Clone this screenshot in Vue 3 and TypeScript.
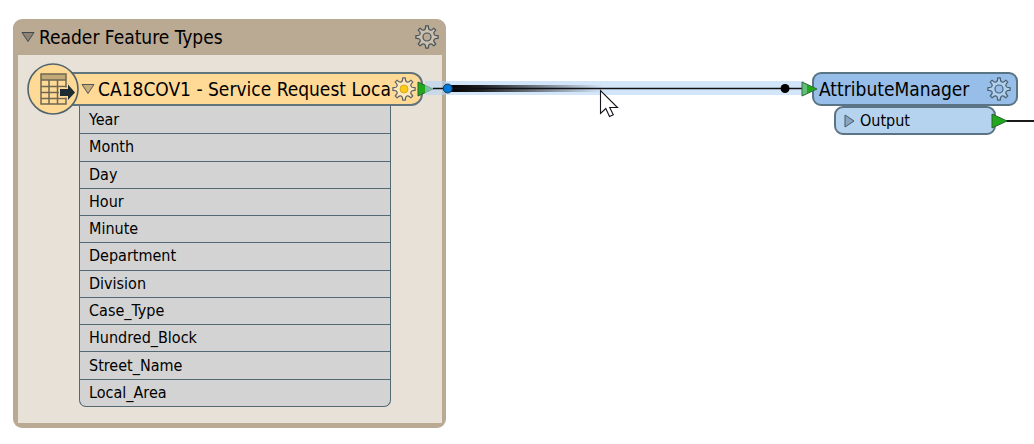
<script setup lang="ts">
import { ref } from 'vue'

const attributes = ref<string[]>([
  'Year',
  'Month',
  'Day',
  'Hour',
  'Minute',
  'Department',
  'Division',
  'Case_Type',
  'Hundred_Block',
  'Street_Name',
  'Local_Area',
])

const point = (radius: number, degrees: number): string => {
  const a = (degrees * Math.PI) / 180
  return `${(12 + radius * Math.sin(a)).toFixed(2)} ${(12 - radius * Math.cos(a)).toFixed(2)}`
}

// Eight teeth with flat tips, joined by rounded valleys.
const gearPath = (): string => {
  let d = ''
  for (let i = 0; i < 8; i++) {
    const c = i * 45
    d += `${i ? 'L' : 'M'}${point(11.2, c - 7)} L${point(11.2, c + 7)} C${point(6.6, c + 9)} ${point(6.6, c + 36)} ${point(11.2, c + 38)} `
  }
  return d + 'Z'
}
const gear = gearPath()
</script>

<template>
  <main class="canvas">
    <section class="bookmark">
      <header class="bookmark-head">
        <button class="toggle" type="button" aria-label="Collapse bookmark">
          <svg width="14" height="12" viewBox="0 0 14 12"><path d="M1 1.5H13L7 10.5Z" fill="#8f8474" stroke="#3f4b50" /></svg>
        </button>
        <h1>Reader Feature Types</h1>
        <button class="gear" type="button" aria-label="Bookmark properties">
          <svg width="24" height="24" viewBox="0 0 24 24">
            <path :d="gear" fill="#cbbfaf" stroke="#46545a" stroke-width="1.2" stroke-linejoin="round" />
            <circle cx="12" cy="12" r="4" fill="#baa993" stroke="#46545a" stroke-width="1.2" />
          </svg>
        </button>
      </header>

      <div class="bookmark-body">
        <div class="reader">
          <svg class="badge" width="52" height="52" viewBox="0 0 52 52">
            <circle cx="26" cy="26" r="25" fill="#ffd996" stroke="#4f646c" stroke-width="1.6" />
            <path d="M14 11H39V17H14Z" fill="#c2a978" />
            <path d="M14 11H39V41H14ZM14 17H39M14 23.500H39M14 29.500H39M14 35.500H39M22 17V41M30.500 17V41" fill="none" stroke="#6f6851" stroke-width="1.500" />
            <path d="M32 24.500H41V34.500H32Z" fill="#ffd996" />
            <path d="M33 26H41V21.500L48 29.500L41 37V33H33Z" fill="#1d2b32" />
          </svg>
          <button class="toggle" type="button" aria-label="Hide attributes">
            <svg width="14" height="12" viewBox="0 0 14 12"><path d="M1 1.500H13L7 10.500Z" fill="#c9ad79" stroke="#4f5a58" /></svg>
          </button>
          <h2>CA18COV1 - Service Request Loca</h2>
          <button class="gear" type="button" aria-label="Feature type properties">
            <svg width="24" height="24" viewBox="0 0 24 24">
              <path :d="gear" fill="#ffe8bd" stroke="#5c6668" stroke-width="1.2" stroke-linejoin="round" />
              <circle cx="12" cy="12" r="4" fill="#fccb16" stroke="#dca92b" />
            </svg>
          </button>
          <svg class="port" width="17" height="16" viewBox="0 0 17 16"><path d="M1 1V15L16 8Z" fill="#22a81c" stroke="#24662b" /></svg>
        </div>
        <ul class="attributes">
          <li v-for="name in attributes" :key="name">{{ name }}</li>
        </ul>
      </div>
    </section>

    <div class="connection">
      <svg class="wire" width="100%" height="14">
        <defs>
          <linearGradient id="flow">
            <stop offset="0" stop-color="#000" />
            <stop offset="0.2" stop-color="#000" stop-opacity="0.87" />
            <stop offset="1" stop-color="#000" stop-opacity="0" />
          </linearGradient>
        </defs>
        <rect width="100%" height="14" fill="#b5d3f4" fill-opacity="0.6" />
        <rect x="6%" y="4" width="41%" height="7" fill="url(#flow)" />
        <line x1="8" y1="7.500" x2="100%" y2="7.500" stroke="#101014" stroke-width="1.500" />
        <circle cx="6%" cy="7.500" r="4.500" fill="#0078d7" stroke="#123a5c" />
        <circle cx="95%" cy="7.500" r="4.500" fill="#000" />
      </svg>
      <svg class="cursor" width="20" height="30" viewBox="0 0 20 30">
        <path d="M1.500 1.500V24.500L6.800 19.500L10.500 27.500L14.300 25.800L10.700 18.500H18.500Z" fill="#fff" stroke="#15151f" stroke-width="1.100" />
      </svg>
    </div>

    <section class="transformer">
      <header class="transformer-head">
        <svg class="port" width="17" height="16" viewBox="0 0 17 16">
          <path d="M1 1V15L16 8Z" fill="#22a81c" />
          <path d="M1 1V15L6 12.700V3.300Z" fill="#67bd78" />
          <path d="M1 1V15L16 8Z" fill="none" stroke="#2b6c42" />
        </svg>
        <h2>AttributeManager</h2>
        <button class="gear" type="button" aria-label="Transformer properties">
          <svg width="24" height="24" viewBox="0 0 24 24">
            <path :d="gear" fill="#b0d0ef" stroke="#4b6172" stroke-width="1.2" stroke-linejoin="round" />
            <circle cx="12" cy="12" r="4" fill="#96bee8" stroke="#4b6172" stroke-width="1.2" />
          </svg>
        </button>
      </header>
      <div class="output-row">
        <div class="output">
          <button class="toggle" type="button" aria-label="Show output attributes">
            <svg width="11" height="14" viewBox="0 0 11 14"><path d="M1 1V13L10 7Z" fill="#8aa5bf" stroke="#46596a" /></svg>
          </button>
          <span>Output</span>
          <svg class="port" width="17" height="16" viewBox="0 0 17 16"><path d="M1 1V15L16 8Z" fill="#22a81c" stroke="#24662b" /></svg>
        </div>
        <div class="tail"></div>
      </div>
    </section>
  </main>
</template>

<style>
body {
  margin: 0;
  background: #fff;
}
</style>

<style scoped>
* {
  box-sizing: border-box;
}

.canvas {
  display: flex;
  align-items: flex-start;
  padding: 19px 0 16px 13px;
  overflow: hidden;
  color: #000;
  font-family: "DejaVu Sans Condensed", "DejaVu Sans", sans-serif;
}

h1,
h2 {
  margin: 0;
  font-size: 19px;
  font-weight: 400;
  line-height: 24px;
  white-space: nowrap;
}

svg {
  display: block;
}

button {
  flex: none;
  padding: 0;
  border: 0;
  background: none;
  color: inherit;
  cursor: pointer;
}

.bookmark {
  flex: 0 1 433px;
  min-width: 0;
  padding: 0 4px 5px 5px;
  border-radius: 9px;
  background: #baa993;
}

.bookmark-head {
  display: flex;
  align-items: center;
  gap: 4px;
  height: 36px;
  padding: 0 3px;
}

.bookmark-head .gear {
  margin-left: auto;
}

.bookmark-body {
  padding: 17px 19px 16px 9px;
  background: #e8e1d8;
}

.reader {
  position: relative;
  display: flex;
  align-items: center;
  gap: 3px;
  height: 34px;
  margin-left: 26px;
  padding: 0 5px 0 26px;
  border: 2px solid #61757d;
  border-radius: 12px;
  background: #ffd996;
}

.reader h2 {
  flex: 1;
  min-width: 0;
}

.reader .gear {
  margin-left: -3px;
}

.badge {
  position: absolute;
  top: -11px;
  left: -28px;
}

.port {
  position: absolute;
  top: 7px;
}

.reader .port {
  right: -13px;
}

.attributes {
  display: grid;
  grid-auto-rows: 1fr;
  height: 301px;
  margin: 0 32px 0 52px;
  padding: 0;
  border: 1px solid #526973;
  border-top: 0;
  border-radius: 0 0 7px 7px;
  background: #d3d3d3;
  list-style: none;
}

.attributes li {
  display: flex;
  align-items: center;
  padding-left: 9px;
  font-size: 16px;
  line-height: 20px;
}

.attributes li + li {
  border-top: 1px solid #526973;
}

.connection {
  position: relative;
  z-index: 1;
  flex: 1 1 0;
  min-width: 80px;
  margin: 62px 8px 0 -21px;
}

.cursor {
  position: absolute;
  top: 8px;
  left: 46%;
}

.transformer {
  flex: none;
  position: relative;
  z-index: 2;
  width: 222px;
  margin-top: 53px;
}

.transformer-head {
  position: relative;
  display: flex;
  align-items: center;
  justify-content: space-between;
  height: 34px;
  margin-right: 16px;
  padding: 0 5px;
  border: 2px solid #5b7485;
  border-radius: 9px;
  background: #96bee8;
}

.transformer-head .port {
  left: -13px;
}

.output-row {
  display: flex;
  align-items: center;
  padding-left: 22px;
}

.output {
  position: relative;
  display: flex;
  align-items: center;
  gap: 5px;
  width: 162px;
  height: 29px;
  padding-left: 8px;
  border: 2px solid #5b7485;
  border-radius: 9px;
  background: #b5d3ef;
  font-size: 16px;
  line-height: 20px;
}

.output .port {
  top: 5px;
  right: -14px;
}

.tail {
  flex: 1;
  height: 2px;
  margin-left: 10px;
  background: #1a1a1a;
}
</style>
